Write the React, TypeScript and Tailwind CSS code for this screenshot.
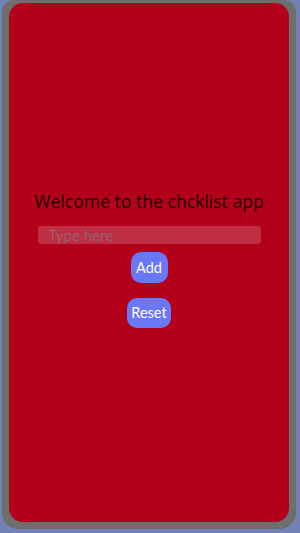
export default function App() {
  return (
    <div className="h-[533px] w-[300px] bg-[#7282b4] pl-[2px] pr-[4px] pb-[4px]">
      <div className="h-full w-full rounded-b-[16px] rounded-t-[12px] bg-[#6d6f6c] px-[7px] pt-[3px] pb-[7px]">
        <div className="flex h-full w-full flex-col items-center justify-center rounded-[14px] bg-[#b3001b] pb-[8px] font-['Lato',sans-serif]">
          <h1 className="text-[17.6px] leading-[24px] text-[#1a0000] font-['Open_Sans',sans-serif]">
            Welcome to the chcklist app
          </h1>
          <input
            type="text"
            placeholder="Type here"
            className="mt-[13px] h-[18px] w-[223px] rounded-[3px] bg-[#ffffff2e] px-[11px] text-[15px] leading-[18px] text-white outline-none placeholder:text-[#93606b]"
          />
          <button className="mt-[8px] h-[31px] w-[37px] rounded-[10px] bg-[#6a77f6] text-[14.5px] text-white">
            Add
          </button>
          <button className="mt-[15px] h-[30px] w-[44px] rounded-[10px] bg-[#6a77f6] text-[14.5px] text-white">
            Reset
          </button>
        </div>
      </div>
    </div>
  );
}
